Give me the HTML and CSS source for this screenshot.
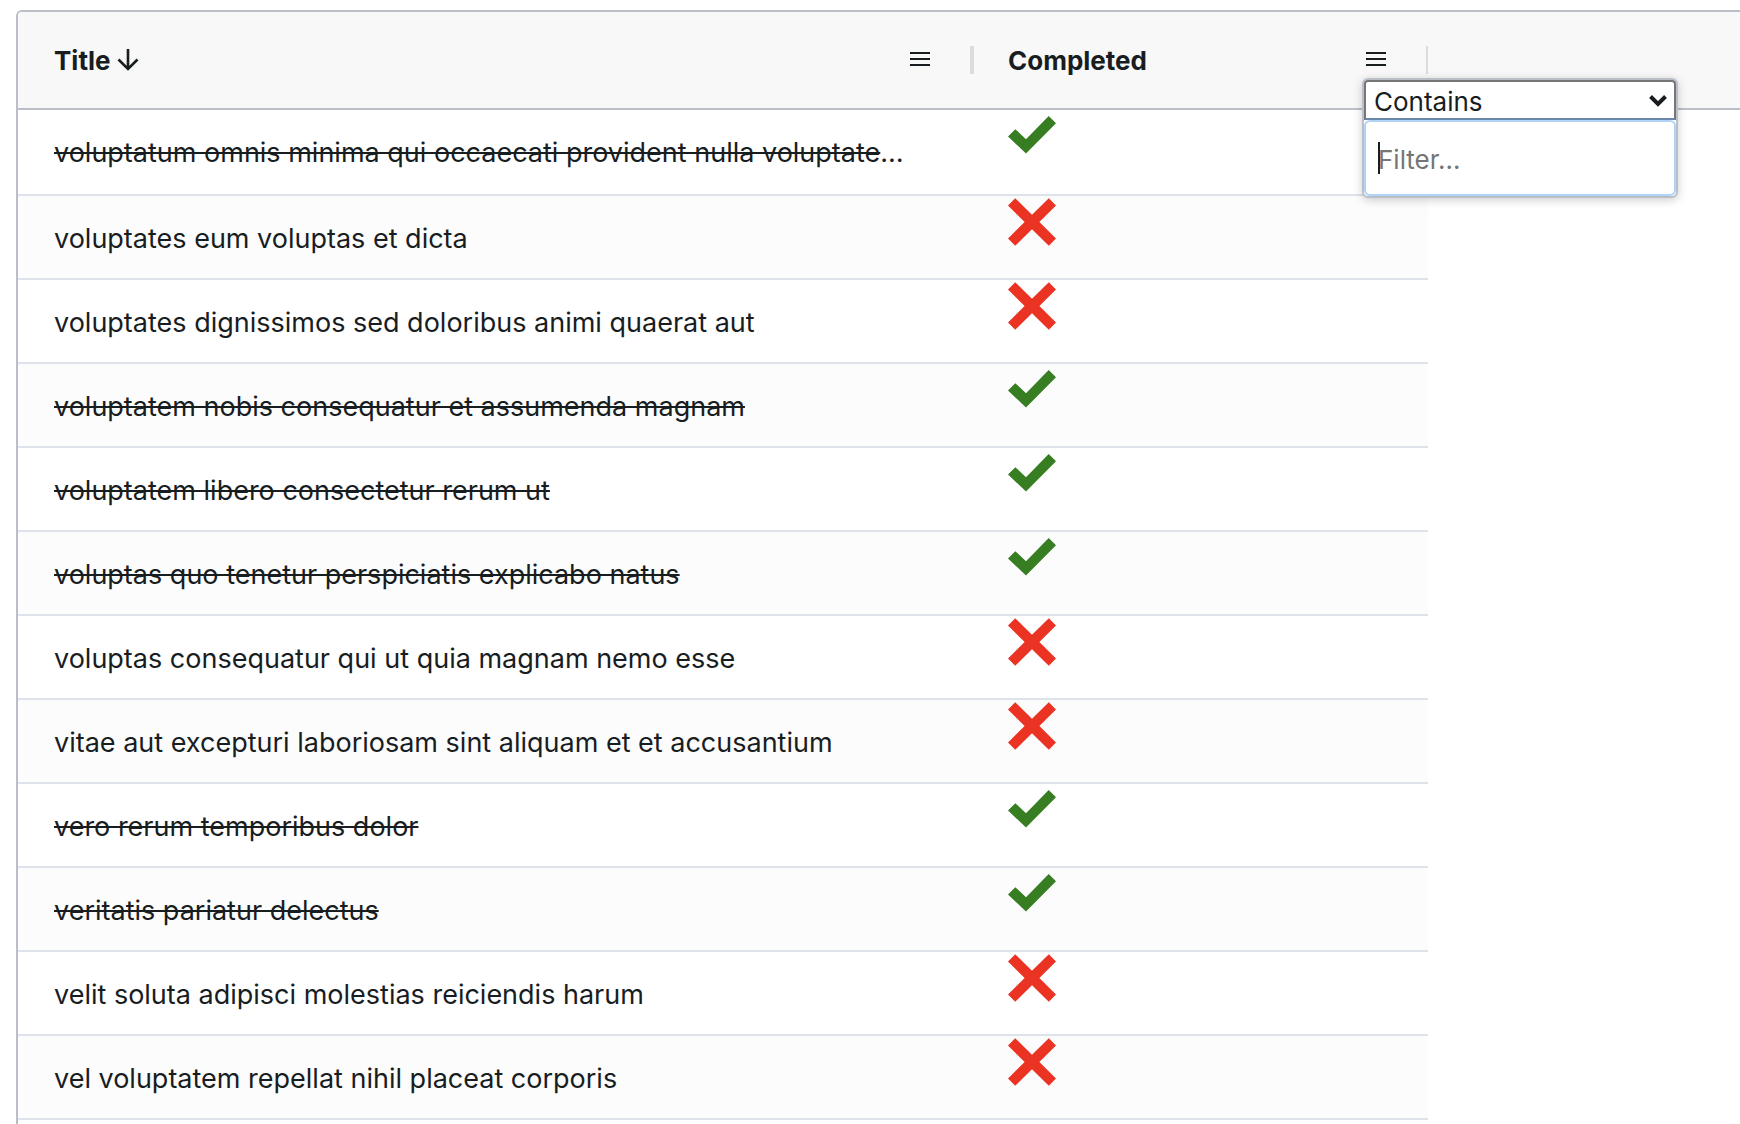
FILE: index.html
```
<!DOCTYPE html>
<html lang="en">
<head>
<meta charset="utf-8">
<title>Todos</title>
<link rel="stylesheet" href="styles.css">
</head>
<body>
<svg class="sprite" aria-hidden="true">
  <symbol id="yes" viewBox="0 0 48 48"><path d="M0 24.400 7.300 17.200 18 27.200 40.700 4 48 11.300 18 41.600Z" fill="#377d22"/></symbol>
  <symbol id="no" viewBox="0 0 48 48"><path d="M7.200 0.200 24 16.800 40.800 0.200 48 7.400 31.400 24 48 40.600 40.800 47.800 24 31.200 7.200 47.800 0 40.600 16.600 24 0 7.400Z" fill="#eb3323"/></symbol>
  <symbol id="menu" viewBox="0 0 20 14"><path d="M0 1H20M0 7H20M0 13H20" stroke="#181d1f" stroke-width="2"/></symbol>
</svg>
<main class="grid">
  <table class="table">
    <colgroup><col class="col-title"><col class="col-completed"><col></colgroup>
    <thead>
      <tr>
        <th scope="col"><div class="head"><span>Title</span><svg class="sort" viewBox="0 0 22 22" aria-hidden="true"><path d="M11 0V20M1.500 10.500 11 20 20.500 10.500" fill="none" stroke="#181d1f" stroke-width="2.600"/></svg><button class="menu" type="button" aria-label="Title menu"><svg><use href="#menu"/></svg></button></div></th>
        <th scope="col"><div class="head"><span>Completed</span><button class="menu" type="button" aria-label="Completed menu"><svg><use href="#menu"/></svg></button>
          <div class="popup">
            <div class="select-wrap">
              <select class="select" aria-label="Filter type"><option>Contains</option></select>
              <svg class="chevron" viewBox="0 0 18 12" aria-hidden="true"><path d="M1.500 1.500 9 9 16.500 1.500" fill="none" stroke="#181d1f" stroke-width="4"/></svg>
            </div>
            <input class="filter" type="text" placeholder="Filter..." aria-label="Filter value">
            <span class="caret"></span>
          </div></div></th>
        <td></td>
      </tr>
    </thead>
    <tbody>
      <tr><td><s>voluptatum omnis minima qui occaecati provident nulla voluptatem ratione</s></td><td><svg role="img" aria-label="Yes"><use href="#yes"/></svg></td></tr>
      <tr><td>voluptates eum voluptas et dicta</td><td><svg role="img" aria-label="No"><use href="#no"/></svg></td></tr>
      <tr><td>voluptates dignissimos sed doloribus animi quaerat aut</td><td><svg role="img" aria-label="No"><use href="#no"/></svg></td></tr>
      <tr><td><s>voluptatem nobis consequatur et assumenda magnam</s></td><td><svg role="img" aria-label="Yes"><use href="#yes"/></svg></td></tr>
      <tr><td><s>voluptatem libero consectetur rerum ut</s></td><td><svg role="img" aria-label="Yes"><use href="#yes"/></svg></td></tr>
      <tr><td><s>voluptas quo tenetur perspiciatis explicabo natus</s></td><td><svg role="img" aria-label="Yes"><use href="#yes"/></svg></td></tr>
      <tr><td>voluptas consequatur qui ut quia magnam nemo esse</td><td><svg role="img" aria-label="No"><use href="#no"/></svg></td></tr>
      <tr><td>vitae aut excepturi laboriosam sint aliquam et et accusantium</td><td><svg role="img" aria-label="No"><use href="#no"/></svg></td></tr>
      <tr><td><s>vero rerum temporibus dolor</s></td><td><svg role="img" aria-label="Yes"><use href="#yes"/></svg></td></tr>
      <tr><td><s>veritatis pariatur delectus</s></td><td><svg role="img" aria-label="Yes"><use href="#yes"/></svg></td></tr>
      <tr><td>velit soluta adipisci molestias reiciendis harum</td><td><svg role="img" aria-label="No"><use href="#no"/></svg></td></tr>
      <tr><td>vel voluptatem repellat nihil placeat corporis</td><td><svg role="img" aria-label="No"><use href="#no"/></svg></td></tr>
    </tbody>
  </table>
</main>
</body>
</html>
```
FILE: styles.css
```
* { box-sizing: border-box; }
body {
  margin: 0;
  height: 100vh;
  padding: 10px 0 0 16px;
  overflow: hidden;
  background: #fff;
  color: #181d1f;
  font-family: Inter, sans-serif;
  font-size: 27px;
}
.sprite { display: none; }
.grid {
  height: 100%;
  border: 2px solid #babfc7;
  border-width: 2px 0 0 2px;
  border-top-left-radius: 6px;
  overflow: hidden;
}
.table {
  width: 100%;
  table-layout: fixed;
  border-collapse: separate;
  border-spacing: 0;
}
.col-title { width: 954px; }
.col-completed { width: 456px; }
thead th, thead td {
  height: 98px;
  padding: 0;
  background: #f8f8f8;
  border-bottom: 2px solid #babfc7;
  text-align: left;
  font-size: 26px;
  font-weight: 700;
}
.head {
  position: relative;
  display: flex;
  align-items: center;
  height: 96px;
  padding: 0 42px 0 36px;
}
.head::after {
  content: "";
  position: absolute;
  right: -2px;
  top: 34px;
  width: 4px;
  height: 28px;
  background: #dadce0;
}
th + th .head::after { right: 0; width: 2px; }
.sort { width: 22px; height: 22px; margin-left: 6px; }
.menu {
  display: flex;
  margin: 0 0 2px auto;
  padding: 0;
  border: 0;
  background: none;
}
.menu svg { width: 20px; height: 14px; }
tbody td {
  height: 84px;
  padding: 4px 56px 0 36px;
  border-bottom: 2px solid #dde2eb;
  line-height: 78px;
  vertical-align: top;
  white-space: nowrap;
  overflow: hidden;
  text-overflow: ellipsis;
}
tbody tr:nth-child(even) td { background: #fcfcfc; }
tbody tr:first-child td { height: 86px; }
tbody td + td { padding-top: 2px; }
tbody td svg { display: block; width: 48px; height: 48px; }
.popup {
  position: absolute;
  z-index: 1;
  top: 66px;
  left: 390px;
  width: 316px;
  border: 2px solid #babfc7;
  border-radius: 6px;
  background: #fff;
  box-shadow: 0 2px 10px rgba(0, 0, 0, 0.2);
}
.select-wrap { position: relative; height: 40px; }
.select {
  appearance: none;
  display: block;
  width: 100%;
  height: 40px;
  padding: 2px 8px 0;
  border: 2px solid #767676;
  border-bottom-color: #6a86a8;
  border-radius: 4px 4px 0 0;
  background: #fff;
  color: #181d1f;
  font: 400 26px Inter, sans-serif;
}
.chevron {
  position: absolute;
  right: 9px;
  top: 15px;
  width: 18px;
  height: 12px;
}
.filter {
  display: block;
  width: 100%;
  height: 76px;
  padding: 2px 12px 0;
  border: 2px solid #b1d3f5;
  border-radius: 6px;
  outline: 0;
  font: 400 26px Inter, sans-serif;
}
.filter::placeholder { color: #757575; }
.caret {
  position: absolute;
  left: 14px;
  bottom: 22px;
  width: 2px;
  height: 32px;
  background: #181d1f;
}
```
